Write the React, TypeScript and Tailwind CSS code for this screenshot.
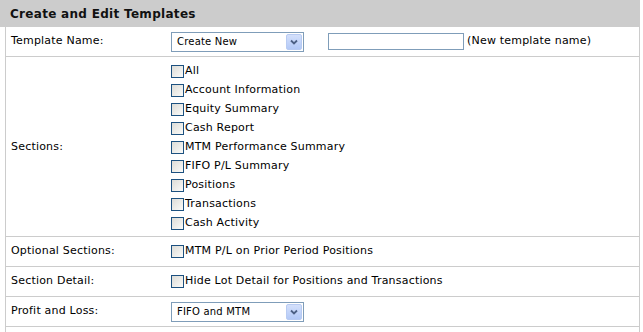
import React from "react";

const sections = [
  "All",
  "Account Information",
  "Equity Summary",
  "Cash Report",
  "MTM Performance Summary",
  "FIFO P/L Summary",
  "Positions",
  "Transactions",
  "Cash Activity",
];

function Check({ label }: { label: string }) {
  return (
    <label className="flex items-center h-[19px]">
      <span className="w-[13px] h-[13px] border border-[#1c5180] bg-gradient-to-br from-[#dcdcd7] to-[#fbfbf9] shrink-0" />
      <span className="ml-px">{label}</span>
    </label>
  );
}

function Select({ value }: { value: string }) {
  return (
    <div className="flex items-center justify-between w-[133px] h-[20px] border border-[#7f9db9] bg-white pl-[5px] pr-px text-[10px]">
      <span>{value}</span>
      <span className="flex items-center justify-center w-[16px] h-[16px] rounded-[2px] border border-[#b8cbf2] bg-gradient-to-b from-[#d4e0fb] to-[#b3c9f7]">
        <svg width="8" height="6" viewBox="0 0 8 6">
          <path d="M1 1.5 L4 4.5 L7 1.5" stroke="#4d6185" strokeWidth="1.8" fill="none" />
        </svg>
      </span>
    </div>
  );
}

function Row({ label, children, tall }: { label: string; children: React.ReactNode; tall?: boolean }) {
  return (
    <div className={`flex items-center border-b border-[#cccccc] ${tall ? "pt-[5px] pb-[3px]" : "h-[30px]"}`}>
      <div className="w-[165px] pl-[5px] shrink-0">{label}</div>
      <div className="flex items-center">{children}</div>
    </div>
  );
}

export default function App() {
  return (
    <div className="w-[643px] h-[332px] bg-white overflow-hidden text-[11px] text-black tracking-[0.2px]" style={{ fontFamily: '"DejaVu Sans", Verdana, sans-serif' }}>
      <div className="w-[640px]">
        <div className="h-[27px] bg-[#cccccc] flex items-center pl-[10px] font-bold text-[12px] tracking-[0.3px] text-[#111]">
          Create and Edit Templates
        </div>
        <div className="ml-[5px] border-l border-r border-[#cccccc]">
          <Row label="Template Name:">
            <Select value="Create New" />
            <div className="ml-[24px] w-[136px] h-[17px] border border-[#7f9db9] bg-white" />
            <span className="ml-[3px]">(New template name)</span>
          </Row>
          <Row label="Sections:" tall>
            <div className="flex flex-col">
              {sections.map((s) => (
                <Check key={s} label={s} />
              ))}
            </div>
          </Row>
          <Row label="Optional Sections:">
            <Check label="MTM P/L on Prior Period Positions" />
          </Row>
          <Row label="Section Detail:">
            <Check label="Hide Lot Detail for Positions and Transactions" />
          </Row>
          <Row label="Profit and Loss:">
            <Select value="FIFO and MTM" />
          </Row>
          <div className="h-[10px]" />
        </div>
      </div>
    </div>
  );
}
